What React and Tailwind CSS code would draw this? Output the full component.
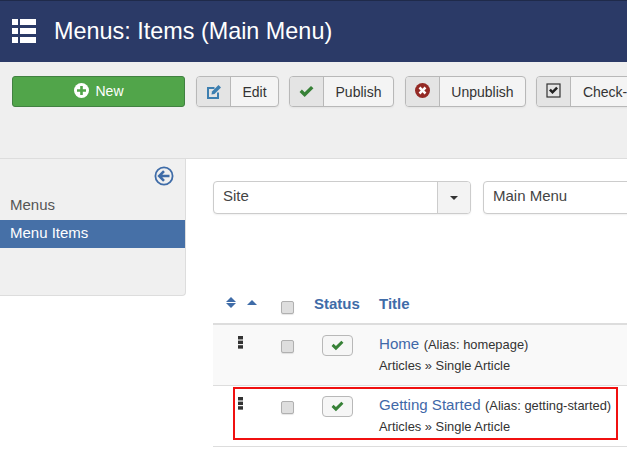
import React from "react";

function Check({ className }) {
  return (
    <svg viewBox="0 0 14 12" className={className}>
      <path d="M0.5 6.5 L2.7 4.2 L5.3 6.6 L11.2 0.8 L13.5 3 L5.3 11.2 Z" fill="currentColor" />
    </svg>
  );
}

function ListIcon() {
  return (
    <svg width="24" height="24" viewBox="0 0 24 24" fill="#fff">
      <rect x="0" y="0" width="6" height="6" />
      <rect x="8" y="0" width="16" height="6" />
      <rect x="0" y="9" width="6" height="6" />
      <rect x="8" y="9" width="16" height="6" />
      <rect x="0" y="18" width="6" height="6" />
      <rect x="8" y="18" width="16" height="6" />
    </svg>
  );
}

function ToolButton({ icon, label, className }) {
  return (
    <div
      className={
        "flex h-[31px] shrink-0 rounded-[4px] border border-[#b8b8b8] bg-[#f4f4f4] shadow-[0_1px_2px_rgba(0,0,0,0.05)] " +
        className
      }
    >
      <div className="flex w-[34px] shrink-0 items-center justify-center rounded-l-[3px] border-r border-[#b8b8b8] bg-[#e4e4e4]">
        {icon}
      </div>
      <div className="flex-1 whitespace-nowrap px-[11px] text-center text-[14px] leading-[30px] text-[#333]">
        {label}
      </div>
    </div>
  );
}

function Box() {
  return (
    <div className="h-[13px] w-[13px] rounded-[2px] border border-[#b0b0b0] bg-[#dedede] shadow-[0_1px_1px_rgba(0,0,0,0.1)]" />
  );
}

function DragHandle() {
  return (
    <div className="flex w-[5px] flex-col gap-[1px]">
      <div className="h-[3px] bg-[#333]" />
      <div className="h-[3px] bg-[#333]" />
      <div className="h-[3px] bg-[#333]" />
    </div>
  );
}

function Row({ title, alias, shaded }) {
  return (
    <div className={"flex h-[61px] border-b border-[#ddd] " + (shaded ? "bg-[#f9f9f9]" : "bg-white")}>
      <div className="w-[68px] shrink-0 pl-[25px] pt-[11px]">
        <div className="origin-top scale-y-[1.15]">
          <DragHandle />
        </div>
      </div>
      <div className="w-[41px] shrink-0 pt-[15px]">
        <Box />
      </div>
      <div className="w-[57px] shrink-0 pt-[10px]">
        <div className="flex h-[21px] w-[31px] items-center justify-center rounded-[4px] border border-[#b8b8b8] bg-[#f6f6f6]">
          <Check className="h-[11px] w-[13px] text-[#378137]" />
        </div>
      </div>
      <div className="whitespace-nowrap pt-[8px]">
        <div className="leading-[22px]">
          <span className="text-[15.1px] text-[#3f68a8]">{title}</span>{" "}
          <span className="text-[12.9px] text-[#333]">(Alias: {alias})</span>
        </div>
        <div className="text-[12.9px] leading-[20px] text-[#333]">Articles » Single Article</div>
      </div>
    </div>
  );
}

export default function App() {
  return (
    <div className="relative h-[451px] w-[627px] overflow-hidden bg-white font-['Liberation_Sans',sans-serif]">
      <header className="flex h-[62px] items-center border-t border-[#1f2a4a] bg-[#2b3a67] pb-[2px] pl-[12px]">
        <ListIcon />
        <h1 className="ml-[18px] mt-[3px] whitespace-nowrap text-[23.4px] font-normal text-white">Menus: Items (Main Menu)</h1>
      </header>

      <div className="flex h-[97px] items-start gap-[11px] border-b border-[#ddd] bg-[#efefef] pl-[12px] pt-[14px]">
        <div className="flex h-[31px] w-[173px] shrink-0 items-center justify-center gap-[6px] rounded-[3px] border border-[#418141] bg-[#51a54a] pl-[1px] text-[14px] text-white">
          <svg width="15" height="15" viewBox="0 0 15 15" className="mt-[-2px]">
            <circle cx="7.5" cy="7.5" r="7.5" fill="#fff" />
            <path d="M6.2 3h2.6v3.2H12v2.6H8.8V12H6.2V8.8H3V6.2h3.2Z" fill="#51a54a" />
          </svg>
          New
        </div>
        <ToolButton
          className="w-[83px]"
          label="Edit"
          icon={
            <svg width="16" height="16" viewBox="0 0 16 16">
              <path d="M12 8.5V14H2V4h6.5" fill="none" stroke="#3d7fb0" strokeWidth="2" />
              <path d="M5.5 10.5 L6 7.5 L12.5 1 L15 3.5 L8.5 10 Z" fill="#3d7fb0" />
            </svg>
          }
        />
        <ToolButton
          className="ml-[-1px] w-[105px]"
          label="Publish"
          icon={<Check className="h-[13px] w-[15px] text-[#378137]" />}
        />
        <ToolButton
          className="w-[121px]"
          label="Unpublish"
          icon={
            <svg width="15" height="15" viewBox="0 0 15 15" className="mt-[-2px]">
              <circle cx="7.5" cy="7.5" r="7.5" fill="#942a25" />
              <path d="M3.6 5.4 L5.4 3.6 L7.5 5.7 L9.6 3.6 L11.4 5.4 L9.3 7.5 L11.4 9.6 L9.6 11.4 L7.5 9.3 L5.4 11.4 L3.6 9.6 L5.7 7.5 Z" fill="#fff" />
            </svg>
          }
        />
        <ToolButton
          className="ml-[-1px] w-[115px]"
          label="Check-in"
          icon={
            <svg width="15" height="15" viewBox="0 0 15 15" className="mt-[-2px]">
              <rect x="1" y="1" width="13" height="13" fill="none" stroke="#333" strokeWidth="1.2" />
              <path d="M3 7.5 L4.8 5.8 L6.5 7.5 L10.2 3.8 L12 5.5 L6.5 11 Z" fill="#222" />
            </svg>
          }
        />
      </div>

      <div className="flex">
        <aside className="h-[137px] w-[186px] shrink-0 rounded-br-[4px] border-b border-r border-[#ddd] bg-[#f0f0f0]">
          <div className="flex h-[33px] justify-end pr-[11px] pt-[7px]">
            <svg width="20" height="20" viewBox="0 0 20 20" fill="none" stroke="#3f6ca8">
              <circle cx="10" cy="10" r="8.6" strokeWidth="1.8" />
              <path d="M15.5 10H6M10 5.2 5.2 10 10 14.8" strokeWidth="2.6" />
            </svg>
          </div>
          <div className="h-[28px] pl-[10px] text-[15px] leading-[26px] text-[#555]">Menus</div>
          <div className="h-[28px] bg-[#4670a7] pl-[10px] text-[15px] leading-[26px] text-white">Menu Items</div>
        </aside>

        <main className="min-w-0 flex-1 pl-[27px] pt-[22px]">
          <div className="flex gap-[12px]">
            <div className="flex h-[33px] w-[258px] shrink-0 rounded-[4px] border border-[#ccc] bg-white shadow-[0_1px_2px_rgba(0,0,0,0.06)]">
              <div className="flex-1 pl-[9px] text-[15px] leading-[28px] text-[#444]">Site</div>
              <div className="flex w-[33px] items-center justify-center rounded-r-[3px] border-l border-[#ccc] bg-[#f3f3f3]">
                <div className="h-0 w-0 border-x-[4px] border-t-[4px] border-x-transparent border-t-[#333]" />
              </div>
            </div>
            <div className="h-[33px] w-[200px] shrink-0 rounded-[4px] border border-[#ccc] bg-white pl-[9px] text-[15px] leading-[28px] text-[#444] shadow-[0_1px_2px_rgba(0,0,0,0.06)]">
              Main Menu
            </div>
          </div>

          <div className="mt-[76px] flex h-[35px] items-start border-b-2 border-[#ddd]">
            <div className="flex w-[68px] shrink-0 gap-[11px] pl-[13px] pt-[7px]">
              <div className="flex flex-col gap-[1px]">
                <div className="h-0 w-0 border-x-[5px] border-b-[5px] border-x-transparent border-b-[#3f6ca8]" />
                <div className="h-0 w-0 border-x-[5px] border-t-[5px] border-x-transparent border-t-[#3f6ca8]" />
              </div>
              <div className="mt-[3px] h-0 w-0 border-x-[5px] border-b-[5px] border-x-transparent border-b-[#3f6ca8]" />
            </div>
            <div className="w-[33px] shrink-0 pt-[11px]">
              <Box />
            </div>
            <div className="w-[65px] shrink-0 pt-[3px] text-[15px] font-bold text-[#3f6ca8]">Status</div>
            <div className="pt-[3px] text-[15px] font-bold text-[#3f6ca8]">Title</div>
          </div>
          <Row title="Home" alias="homepage" shaded />
          <Row title="Getting Started" alias="getting-started" />
        </main>
      </div>

      <div className="absolute left-[233px] top-[387px] h-[53px] w-[385px] border-[2px] border-[#f01010]" />
    </div>
  );
}
